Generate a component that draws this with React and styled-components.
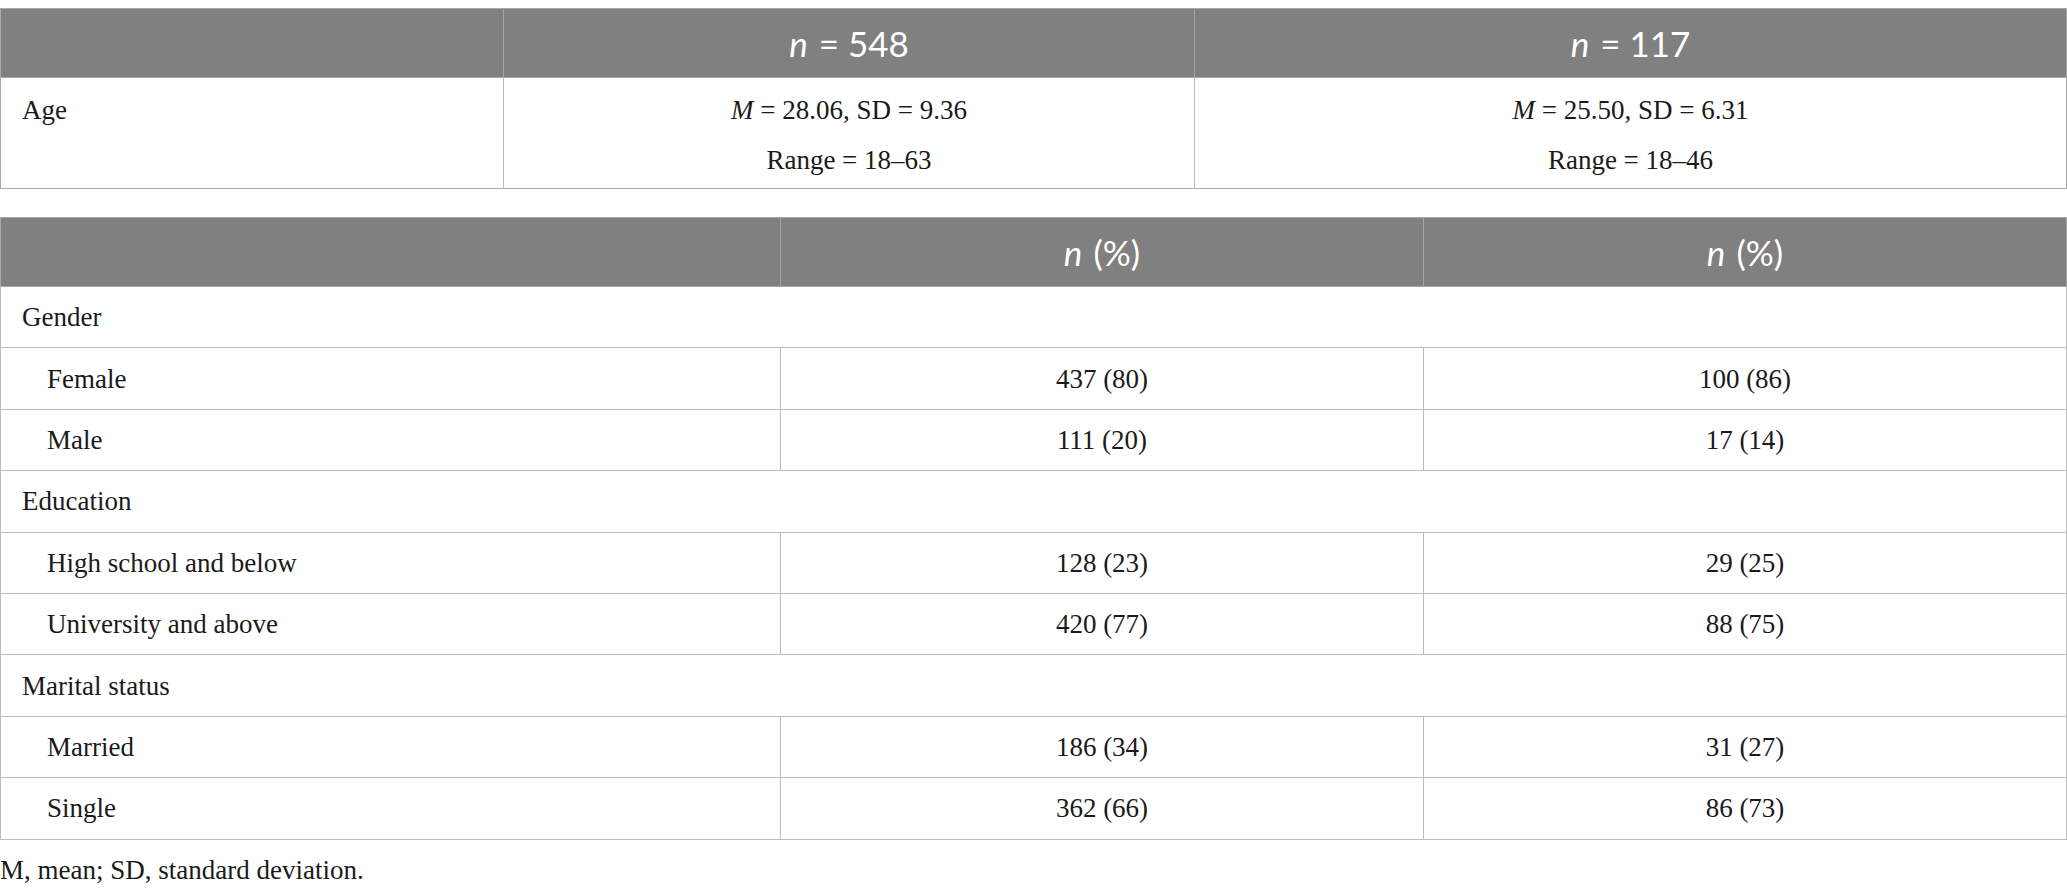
import React from 'react';
import styled, { createGlobalStyle } from 'styled-components';

const GlobalStyle = createGlobalStyle`
    body {
        margin: 0;
        background: #ffffff;
        font-family: "Liberation Serif", "Times New Roman", serif;
        color: #1a1a1a;
    }
`

const ageRow = {
    label: 'Age',
    groups: [
        { mean: '28.06', sd: '9.36', range: '18–63' },
        { mean: '25.50', sd: '6.31', range: '18–46' },
    ],
}

const sections = [
    { title: 'Gender', rows: [['Female', '437 (80)', '100 (86)'], ['Male', '111 (20)', '17 (14)']] },
    { title: 'Education', rows: [['High school and below', '128 (23)', '29 (25)'], ['University and above', '420 (77)', '88 (75)']] },
    { title: 'Marital status', rows: [['Married', '186 (34)', '31 (27)'], ['Single', '362 (66)', '86 (73)']] },
]

export default function App() {
    return (
        <Page>
            <GlobalStyle />
            <Table>
                <colgroup>
                    <col style={{ width: 503 }} />
                    <col style={{ width: 691 }} />
                    <col />
                </colgroup>
                <thead>
                    <tr>
                        <HeadCell />
                        <HeadCell><i>n</i> = 548</HeadCell>
                        <HeadCell><i>n</i> = 117</HeadCell>
                    </tr>
                </thead>
                <tbody>
                    <tr>
                        <StackCell align="left">
                            <Line>{ageRow.label}</Line>
                        </StackCell>
                        {ageRow.groups.map((g, i) => (
                            <StackCell key={i}>
                                <Line><i>M</i> = {g.mean}, SD = {g.sd}</Line>
                                <Line>Range = {g.range}</Line>
                            </StackCell>
                        ))}
                    </tr>
                </tbody>
            </Table>

            <Table $gap>
                <colgroup>
                    <col style={{ width: 780 }} />
                    <col style={{ width: 643 }} />
                    <col />
                </colgroup>
                <thead>
                    <tr>
                        <HeadCell />
                        <HeadCell><i>n</i> (%)</HeadCell>
                        <HeadCell><i>n</i> (%)</HeadCell>
                    </tr>
                </thead>
                <tbody>
                    {sections.map(section => (
                        <React.Fragment key={section.title}>
                            <tr>
                                <Cell colSpan={3} align="left">{section.title}</Cell>
                            </tr>
                            {section.rows.map(([label, a, b]) => (
                                <tr key={label}>
                                    <Cell align="left" indent>{label}</Cell>
                                    <Cell>{a}</Cell>
                                    <Cell>{b}</Cell>
                                </tr>
                            ))}
                        </React.Fragment>
                    ))}
                </tbody>
            </Table>

            <Note>M, mean; SD, standard deviation.</Note>
        </Page>
    )
}

const Page = styled.div`
    padding-top: 8px;
    width: 2067px;
`

const Table = styled.table`
    width: 100%;
    table-layout: fixed;
    border-collapse: collapse;
    border: 1px solid #a9a9a9;
    margin-top: ${props => props.$gap ? '28px' : '0'};
`

const HeadCell = styled.th`
    height: 68px;
    padding: 0;
    background: #7f807f;
    color: #ffffff;
    font-family: "Lato", "Open Sans", sans-serif;
    font-weight: 400;
    font-size: 35px;
    text-align: center;
    vertical-align: middle;
    border-left: 1px solid #a3a3a3;
    border-bottom: 1px solid #a9a9a9;
    &:first-child {
        border-left: none;
    }
    i {
        margin-right: 2px;
    }
`

const Cell = styled.td`
    height: 60.4px;
    padding: 0 21px;
    padding-left: ${props => props.indent ? '46px' : '21px'};
    font-size: 27px;
    line-height: 32px;
    text-align: ${props => props.align || 'center'};
    vertical-align: middle;
    border: 1px solid #bcbcbc;
`

const StackCell = styled.td`
    padding: 14px 21px 9px;
    font-size: 27px;
    line-height: 37px;
    text-align: ${props => props.align || 'center'};
    vertical-align: top;
    border-left: 1px solid #bcbcbc;
    &:first-child {
        border-left: none;
    }
`

const Line = styled.div`
    & + & {
        margin-top: 13px;
    }
`

const Note = styled.p`
    margin: 14px 0 0;
    font-size: 27px;
    line-height: 32px;
`
